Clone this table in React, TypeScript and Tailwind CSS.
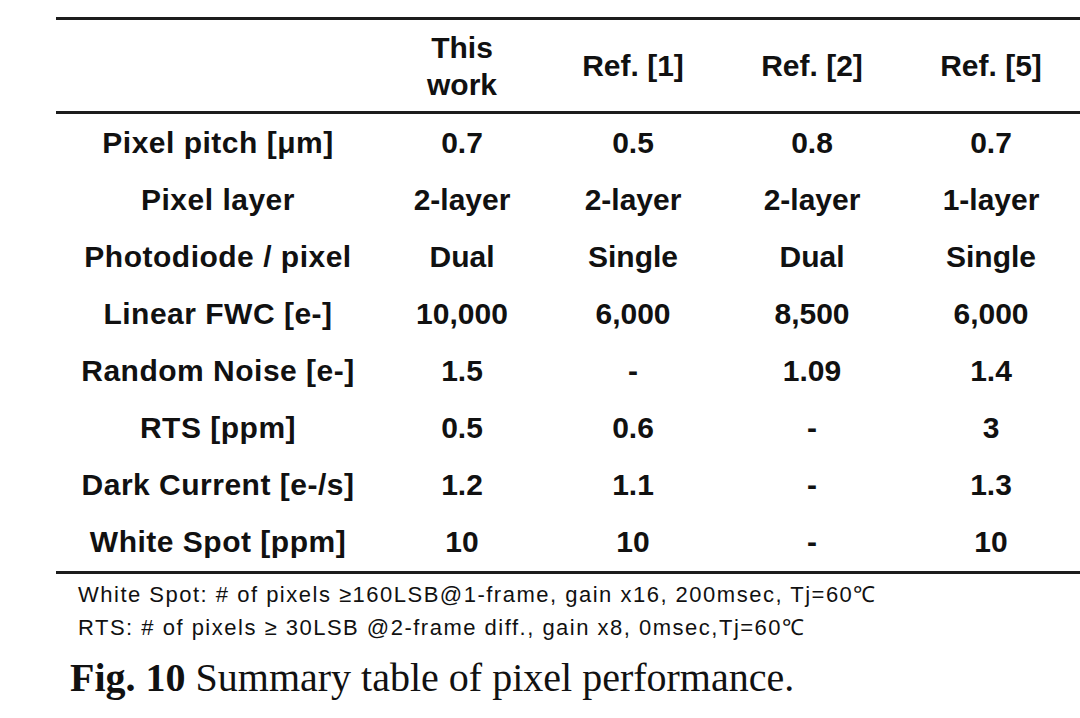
const header = ['This\nwork', 'Ref. [1]', 'Ref. [2]', 'Ref. [5]']

const rows: string[][] = [
  ['Pixel pitch [μm]', '0.7', '0.5', '0.8', '0.7'],
  ['Pixel layer', '2-layer', '2-layer', '2-layer', '1-layer'],
  ['Photodiode / pixel', 'Dual', 'Single', 'Dual', 'Single'],
  ['Linear FWC [e-]', '10,000', '6,000', '8,500', '6,000'],
  ['Random Noise [e-]', '1.5', '-', '1.09', '1.4'],
  ['RTS [ppm]', '0.5', '0.6', '-', '3'],
  ['Dark Current [e-/s]', '1.2', '1.1', '-', '1.3'],
  ['White Spot [ppm]', '10', '10', '-', '10'],
]

const grid = 'grid grid-cols-[324px_164px_178px_180px_178px]'

export default function App() {
  return (
    <div className="w-[1080px] h-[718px] overflow-hidden bg-white text-[#111]">
      <div className="pt-[17px] pl-[56px]">
        {/* Table */}
        <div className="w-[1024px] border-t-[3px] border-b-[3px] border-[#1c1c1c] font-['Liberation_Sans',Arial,sans-serif] font-bold text-[30px]">
          <div className={`${grid} h-[94px] items-center border-b-[3px] border-[#1c1c1c]`}>
            <div />
            {header.map((h) => (
              <div key={h} className="text-center whitespace-pre-line leading-[37px]">
                {h}
              </div>
            ))}
          </div>
          {rows.map((r) => (
            <div key={r[0]} className={`${grid} h-[57.1px] items-center`}>
              {r.map((c, i) => (
                <div key={i} className={`text-center leading-none ${i === 0 ? 'tracking-[0.5px]' : ''}`}>
                  {c}
                </div>
              ))}
            </div>
          ))}
        </div>

        {/* Notes */}
        <div className="mt-[4px] pl-[22px] font-['Liberation_Sans',Arial,sans-serif] text-[22px] leading-[33px] tracking-[1.5px] text-[#111]">
          <p>White Spot: # of pixels ≥160LSB@1-frame, gain x16, 200msec, Tj=60℃</p>
          <p>RTS: # of pixels ≥ 30LSB @2-frame diff., gain x8, 0msec,Tj=60℃</p>
        </div>

        {/* Caption */}
        <p className="mt-[12px] pl-[14px] font-['Liberation_Serif','Times_New_Roman',serif] text-[40px] leading-[44px] text-[#111]">
          <span className="font-bold">Fig. 10</span> Summary table of pixel performance.
        </p>
      </div>
    </div>
  )
}
